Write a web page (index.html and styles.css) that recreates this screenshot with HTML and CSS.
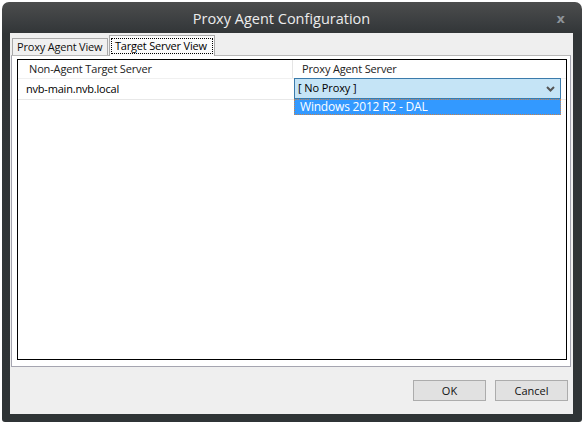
FILE: index.html
```html
<!DOCTYPE html>
<html>
<head>
<meta charset="utf-8">
<link rel="stylesheet" href="styles.css">
</head>
<body>
<div class="window">
  <div class="titlebar">
    <span class="title">Proxy Agent Configuration</span>
    <span class="close">x</span>
  </div>
  <div class="client">
    <div class="tabs">
      <div class="tab">Proxy Agent View</div>
      <div class="tab active"><span class="focus">Target Server View</span></div>
    </div>
    <div class="panel">
      <div class="listview">
        <div class="header">
          <div class="col c1">Non-Agent Target Server</div>
          <div class="col c2">Proxy Agent Server</div>
        </div>
        <div class="row">
          <div class="cell c1">nvb-main.nvb.local</div>
          <div class="cell c2"></div>
          <div class="combo">
            <span>[ No Proxy ]</span>
            <svg class="chev" width="9" height="6" viewBox="0 0 9 6"><path d="M1 1 L4.5 4.5 L8 1" fill="none" stroke="#555" stroke-width="2"/></svg>
          </div>
          <div class="dropdown"><span>Windows 2012 R2 - DAL</span></div>
        </div>
      </div>
    </div>
    <div class="footer">
      <button class="btn">OK</button>
      <button class="btn">Cancel</button>
    </div>
  </div>
</div>
</body>
</html>
```
FILE: styles.css
```css
html, body {
  margin: 0;
  padding: 0;
  background: #ffffff;
}
body {
  width: 584px;
  height: 424px;
  overflow: hidden;
  font-family: "Open Sans", "Noto Sans", sans-serif;
}
.window {
  margin: 2px 0 0 2px;
  width: 580px;
  height: 420px;
  box-sizing: border-box;
  border-radius: 7px 7px 3px 3px;
  background: linear-gradient(#4c4d4d 0px, #3b3e40 20px, #313537 32px, #2f3436 100%);
  padding: 0 9px 8px 8px;
  display: flex;
  flex-direction: column;
}
.titlebar {
  height: 31px;
  flex: none;
  position: relative;
  display: flex;
  align-items: center;
  justify-content: center;
  padding-right: 20px;
}
.title {
  color: #ececec;
  font-size: 14.5px;
  letter-spacing: 0;
  margin-top: 1px;
}
.close {
  position: absolute;
  right: 8px;
  top: 9px;
  color: #8d9399;
  font-family: "DejaVu Sans", sans-serif;
  font-weight: bold;
  font-size: 13px;
}
.client {
  flex: 1;
  background: #efefef;
  display: flex;
  flex-direction: column;
  padding: 0 0 0 1px;
}
.tabs {
  height: 22px;
  display: flex;
  align-items: flex-end;
  padding-left: 1px;
  flex: none;
}
.tab {
  box-sizing: border-box;
  height: 18px;
  border: 1px solid #a9a9a9;
  border-bottom: none;
  background: #f0f0f0;
  font-size: 11px;
  letter-spacing: -0.2px;
  color: #111;
  padding: 0 4px;
  line-height: 16px;
  width: 96px;
  margin-bottom: -1px;
  white-space: nowrap;
}
.tab.active {
  height: 21px;
  width: 106px;
  background: #fbfbfb;
  padding: 2px 1px 0 1px;
  line-height: 14px;
  position: relative;
  z-index: 1;
  margin-left: 1px;
}
.focus {
  display: block;
  border: 1px dotted #000;
  height: 14px;
  padding: 0 3px;
  color: #000;
}
.panel {
  box-sizing: border-box;
  height: 312px;
  width: 560px;
  background: #ffffff;
  border: 1px solid #a5a5b0;
  border-top-color: #b8b8b8;
  padding: 3px 3px 6px 5px;
  flex: none;
}
.listview {
  box-sizing: border-box;
  height: 301px;
  border: 1px solid #000;
  background: #fff;
  width: 550px;
}
.header {
  display: flex;
  height: 18px;
  border-bottom: 1px solid #f0f0f0;
}
.col {
  font-size: 11px;
  letter-spacing: -0.15px;
  color: #222;
  line-height: 18px;
  box-sizing: border-box;
  white-space: nowrap;
}
.header .c1 {
  width: 275px;
  padding-left: 11px;
  border-right: 1px solid #e5e5e5;
}
.header .c2 {
  padding-left: 9px;
}
.row {
  display: flex;
  height: 20px;
  border-bottom: 1px solid #e8e8e8;
  position: relative;
}
.cell {
  font-size: 11px;
  letter-spacing: -0.2px;
  line-height: 20px;
  color: #000;
  white-space: nowrap;
}
.row .c1 {
  width: 275px;
  padding-left: 8px;
  box-sizing: border-box;
}
.combo {
  position: absolute;
  left: 276px;
  top: -1px;
  width: 267px;
  height: 21px;
  box-sizing: border-box;
  background: #c5e4f6;
  border: 1px solid #3b7bab;
  font-size: 11px;
  letter-spacing: -0.1px;
  line-height: 18px;
  padding-left: 3px;
  color: #000;
  white-space: nowrap;
}
.chev {
  position: absolute;
  right: 5px;
  top: 7px;
}
.dropdown {
  position: absolute;
  left: 276px;
  top: 20px;
  width: 267px;
  height: 16px;
  box-sizing: border-box;
  background: #3399ff;
  border: 1px dotted #c7804a;
  color: #fff;
  font-size: 12px;
  letter-spacing: -0.2px;
  line-height: 14px;
  padding-left: 5px;
  white-space: nowrap;
}
.footer {
  flex: 1;
  display: flex;
  justify-content: flex-end;
  align-items: flex-start;
  padding: 13px 5px 0 0;
  gap: 9px;
}
.btn {
  width: 73px;
  height: 21px;
  box-sizing: border-box;
  background: #e1e1e1;
  border: 1px solid #acacac;
  border-radius: 0;
  font-family: "Open Sans", "Noto Sans", sans-serif;
  font-size: 11px;
  color: #111;
  padding: 0;
  margin: 0;
}
```
